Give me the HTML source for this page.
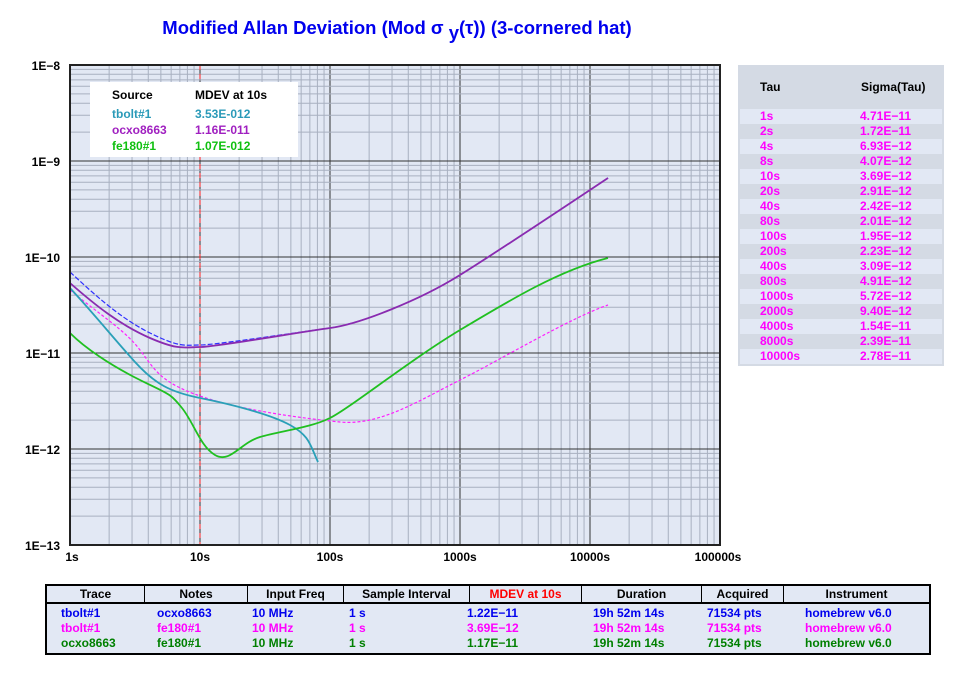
<!DOCTYPE html>
<html><head><meta charset="utf-8"><style>
body{margin:0;width:974px;height:690px;background:#fff;font-family:"Liberation Sans",sans-serif;overflow:hidden;position:relative}
.t{position:absolute;font-weight:bold;font-size:12px}
table{border-collapse:collapse}
</style></head><body>
<div class="t" style="left:0;width:794px;text-align:center;top:17px;font-size:18.5px;color:#0000ee">Modified Allan Deviation (Mod σ <span style="position:relative;top:5px">y</span>(τ)) (3-cornered hat)</div>
<svg width="974" height="690" style="position:absolute;left:0;top:0">
<rect x="70" y="65" width="650" height="480" fill="#e2e8f4"/>
<g id="grid"></g>
<line x1="200" y1="65" x2="200" y2="545" stroke="#ff2020" stroke-dasharray="5,4"/>
<rect x="90" y="82" width="208" height="75" fill="#fff"/>
<g fill="none" stroke-linejoin="round">
<path stroke="#3030ff" stroke-width="1.2" stroke-dasharray="5,2" d="M70,272 C95,295 120,318 150,333 S185,345 200,345 S300,332 330,328 S420,300 460,275 S560,210 608,178"/>
<path stroke="#ff20ff" stroke-width="1.2" stroke-dasharray="3,2" d="M70,290 C100,315 125,330 140,350 S160,382 200,396 S300,418 340,422 S420,400 460,380 S570,318 608,305"/>
<path stroke="#8a2bb0" stroke-width="1.8" d="M70,283 C95,305 120,325 150,338 S185,347 200,347 S300,332 330,328 S420,300 460,275 S560,210 608,178"/>
<path stroke="#2aa0b8" stroke-width="1.8" d="M70,288 C95,315 115,340 135,362 S170,392 200,398 S270,414 290,425 S310,445 318,462"/>
<path stroke="#20c020" stroke-width="1.8" d="M70,333 C85,348 110,365 140,380 S170,393 182,408 S200,446 215,455 S240,443 260,437 S310,428 330,418 S410,360 460,330 S560,270 608,258"/>
</g>
<rect x="70" y="65" width="650" height="480" fill="none" stroke="#222" stroke-width="2"/>
<g font-family="Liberation Sans" font-weight="bold" font-size="12">
<text x="112" y="99">Source</text><text x="195" y="99">MDEV at 10s</text>
<text x="112" y="118" fill="#2a9ab8">tbolt#1</text><text x="195" y="118" fill="#2a9ab8">3.53E-012</text>
<text x="112" y="134" fill="#a020c0">ocxo8663</text><text x="195" y="134" fill="#a020c0">1.16E-011</text>
<text x="112" y="150" fill="#10c010">fe180#1</text><text x="195" y="150" fill="#10c010">1.07E-012</text>
<g text-anchor="end"><text x="60" y="70">1E−8</text><text x="60" y="166">1E−9</text><text x="60" y="262">1E−10</text><text x="60" y="358">1E−11</text><text x="60" y="454">1E−12</text><text x="60" y="550">1E−13</text></g>
<g text-anchor="middle"><text x="72" y="561">1s</text><text x="200" y="561">10s</text><text x="330" y="561">100s</text><text x="460" y="561">1000s</text><text x="590" y="561">10000s</text><text x="718" y="561">100000s</text></g>
</g>
</svg>
<script>
var g=document.getElementById('grid'),s='';
for(var d=0;d<5;d++)for(var k=1;k<10;k++){var x=70+130*d+130*Math.log10(k);s+='<line x1="'+x+'" y1="65" x2="'+x+'" y2="545" stroke="'+(k==1?'#333':'#a8b0c0')+'"/>';}
for(var d=0;d<5;d++)for(var k=1;k<10;k++){var y=545-96*d-96*Math.log10(k);s+='<line x1="70" y1="'+y+'" x2="720" y2="'+y+'" stroke="'+(k==1?'#333':'#a8b0c0')+'"/>';}
g.innerHTML=s;
</script>
<div style="position:absolute;left:738px;top:65px;width:206px;height:301px;background:#d4dae4">
<div class="t" style="left:22px;top:15px;color:#000">Tau</div>
<div class="t" style="left:123px;top:15px;color:#000">Sigma(Tau)</div>
<div id="rt" style="position:absolute;left:2px;top:44px;width:202px"></div>
</div>
<script>
var r=[["1s","4.71E−11"],["2s","1.72E−11"],["4s","6.93E−12"],["8s","4.07E−12"],["10s","3.69E−12"],["20s","2.91E−12"],["40s","2.42E−12"],["80s","2.01E−12"],["100s","1.95E−12"],["200s","2.23E−12"],["400s","3.09E−12"],["800s","4.91E−12"],["1000s","5.72E−12"],["2000s","9.40E−12"],["4000s","1.54E−11"],["8000s","2.39E−11"],["10000s","2.78E−11"]],h='';
for(var i=0;i<r.length;i++)h+='<div style="position:relative;height:15px;background:'+(i%2?'#d4dae4':'#e2e8f4')+';color:#ff00ff;font-weight:bold;font-size:12px;line-height:15px"><span style="position:absolute;left:20px">'+r[i][0]+'</span><span style="position:absolute;left:120px">'+r[i][1]+'</span></div>';
document.getElementById('rt').innerHTML=h;
</script>
<table style="position:absolute;left:45px;top:584px;width:886px;height:71px;border:2px solid #000;background:#e2e8f4;font-weight:bold;font-size:12px">
<tr style="height:17px;text-align:center;border-bottom:2px solid #000">
<td style="width:95px;border-right:1px solid #000">Trace</td><td style="width:100px;border-right:1px solid #000">Notes</td><td style="width:93px;border-right:1px solid #000">Input Freq</td><td style="width:123px;border-right:1px solid #000">Sample Interval</td><td style="width:109px;border-right:1px solid #000;color:#ff0000">MDEV at 10s</td><td style="width:117px;border-right:1px solid #000">Duration</td><td style="width:79px;border-right:1px solid #000">Acquired</td><td>Instrument</td></tr>
<tr><td colspan="8" style="padding:2px 0;line-height:15px;vertical-align:top">
<div id="bt"></div></td></tr>
</table>
<script>
var rows=[["#0000ee","tbolt#1","ocxo8663","1.22E−11"],["#ff00ff","tbolt#1","fe180#1","3.69E−12"],["#008000","ocxo8663","fe180#1","1.17E−11"]],xs=[14,110,205,302,420,546,660,758],b='';
rows.forEach(function(q){var v=[q[1],q[2],"10 MHz","1 s",q[3],"19h 52m 14s","71534 pts","homebrew v6.0"];b+='<div style="position:relative;height:15px;color:'+q[0]+'">';v.forEach(function(t,i){b+='<span style="position:absolute;left:'+xs[i]+'px">'+t+'</span>'});b+='</div>';});
document.getElementById('bt').innerHTML=b;
</script>
</body></html>
